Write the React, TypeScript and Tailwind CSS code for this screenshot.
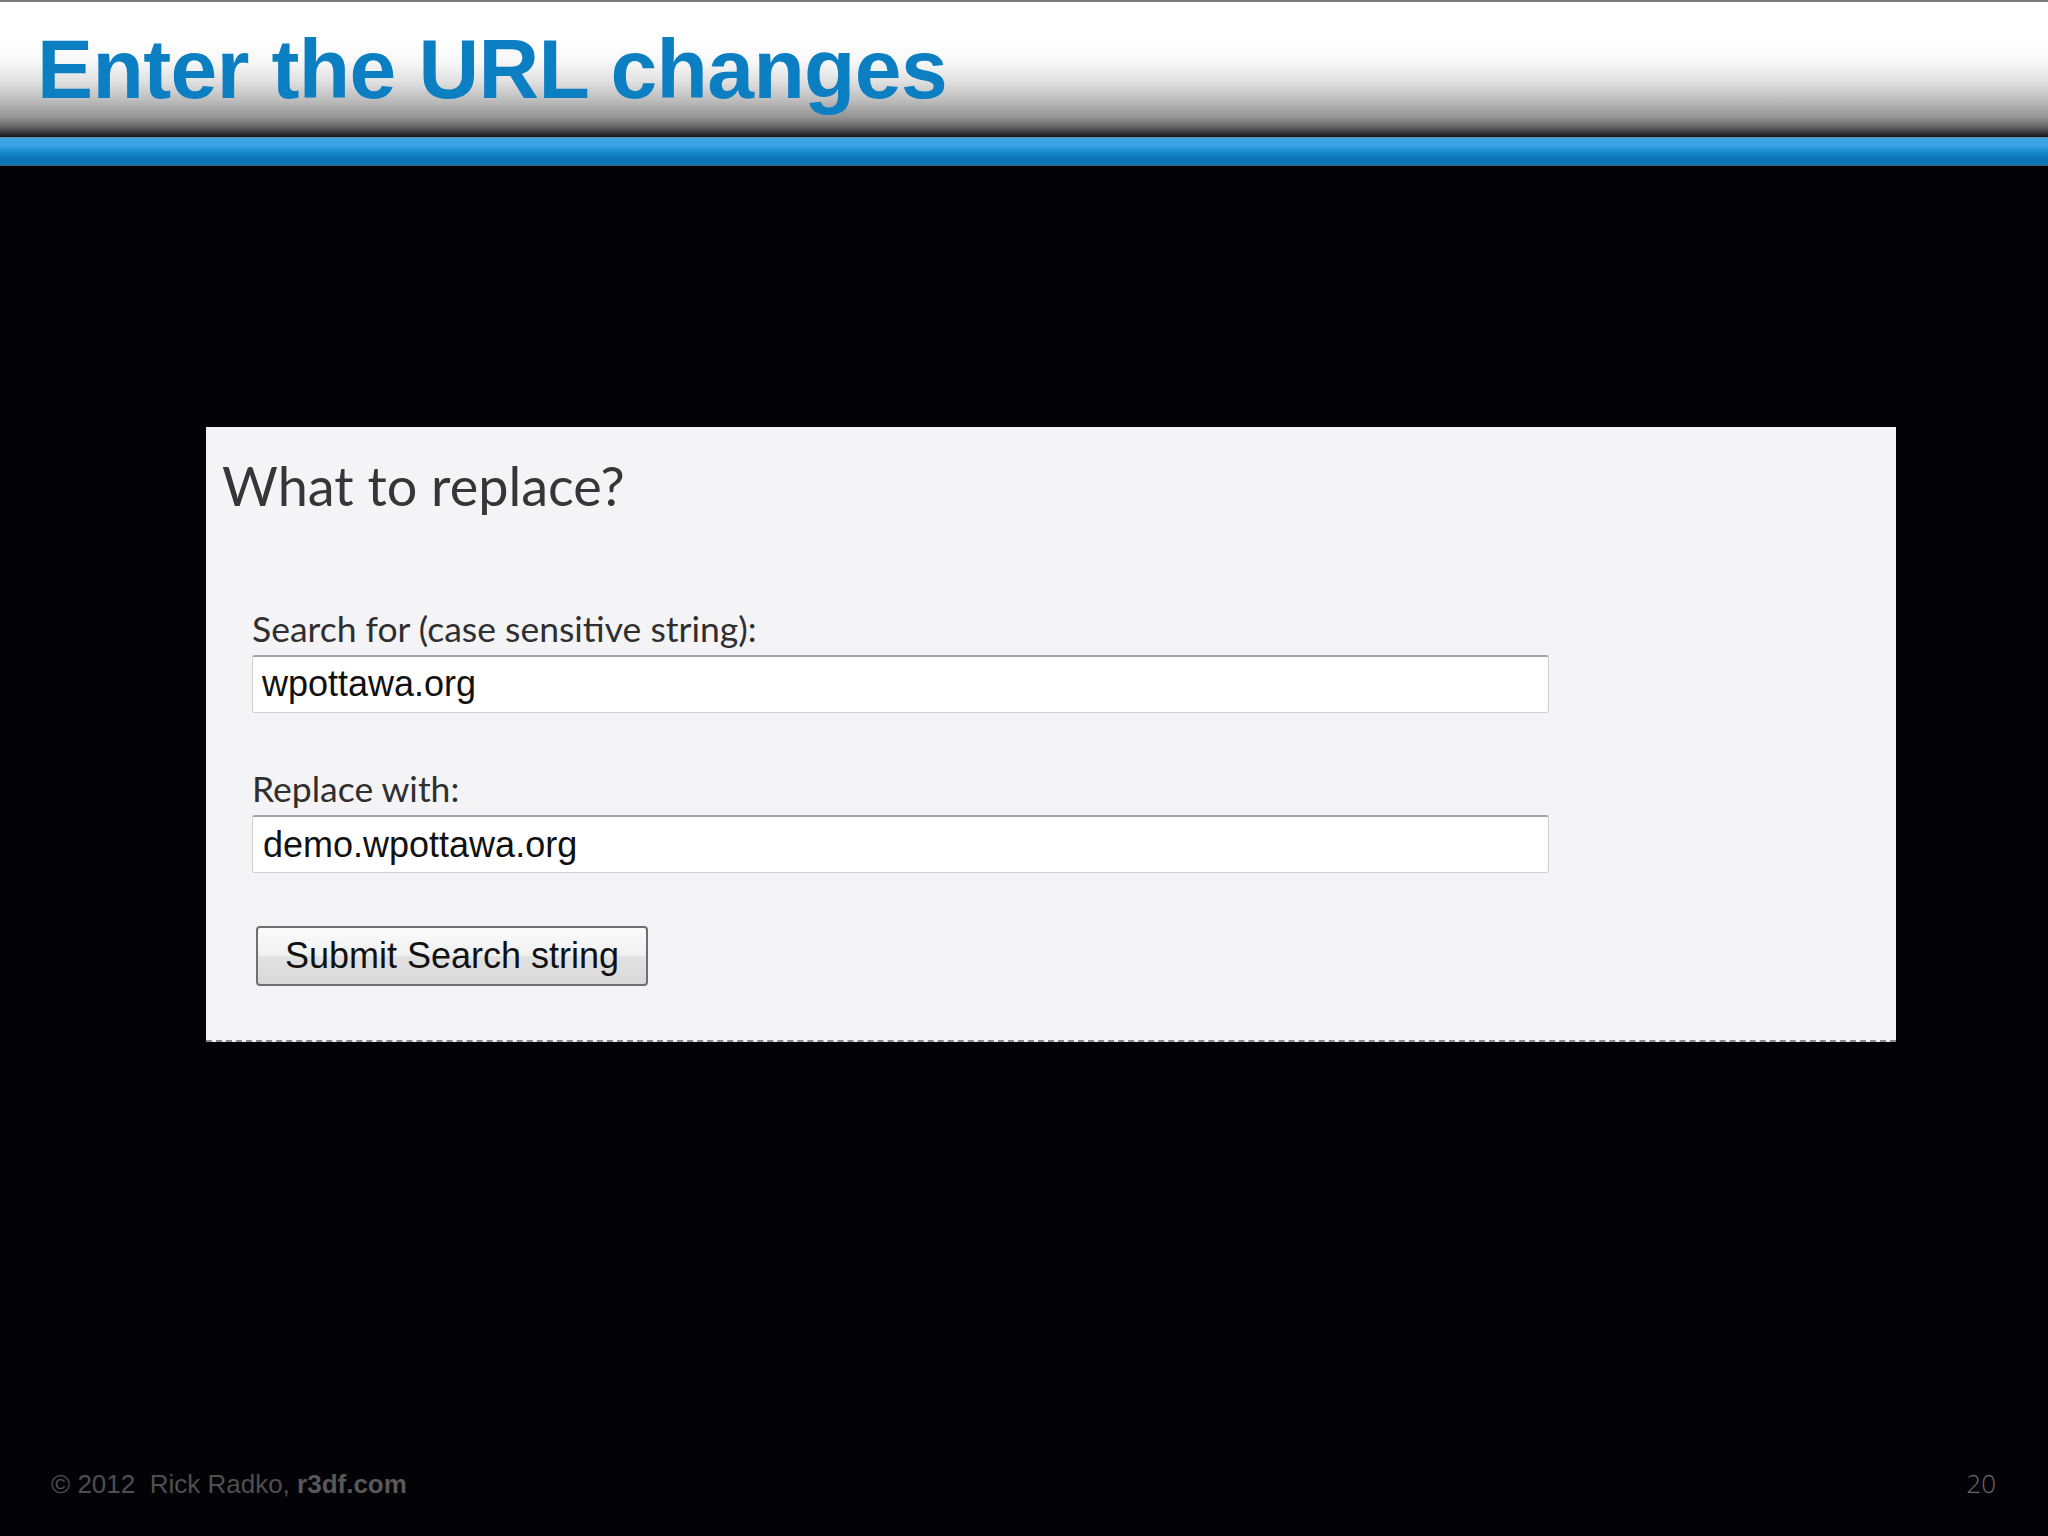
import React from "react";

export default function App() {
  return (
    <div className="w-[2048px] h-[1536px] bg-[#030207] flex flex-col overflow-hidden">
      <header className="h-[137px] shrink-0 border-t-2 border-[#7a7a7a] bg-[linear-gradient(to_bottom,#ffffff_0%,#ffffff_28%,#f8f8f8_44%,#e2e2e2_58%,#bcbcbc_73%,#959595_85%,#6b6b6b_92%,#3d3d40_96%,#18161d_100%)] pl-[37px] pt-[25px]">
        <h1 className="font-['Liberation_Sans',Arial,sans-serif] font-bold text-[84px] leading-none tracking-[-0.6px] text-[#0b7fc2]">
          Enter the URL changes
        </h1>
      </header>
      <div className="h-[29px] shrink-0 bg-[linear-gradient(to_bottom,#5f8aa6_0%,#3aa6e4_9%,#38a3e2_30%,#1586c8_55%,#0a75b8_75%,#0a74b6_93%,#47657a_100%)]" />
      <main className="flex-1 pt-[261px] pl-[206px]">
        <section className="w-[1690px] h-[615px] bg-[#f4f3f6] border-b-2 border-dashed border-[#8a8a8a] flex flex-col">
          <h2 className="pl-[16px] pt-[32px] font-['Lato','Open_Sans',sans-serif] text-[54px] leading-none text-[#363636]">
            What to replace?
          </h2>
          <form className="pl-[46px] mt-[98px] flex flex-col items-start" onSubmit={(e) => e.preventDefault()}>
            <label className="font-['Lato','Open_Sans',sans-serif] text-[35.5px] leading-none text-[#2f2f2f] mb-[8px]">
              Search for (case sensitive string):
            </label>
            <input
              readOnly
              value="wpottawa.org"
              className="w-[1297px] h-[58px] bg-white border border-[#cfcfcf] border-t-2 border-t-[#a3a3a3] rounded-[3px] pl-[9px] font-['Liberation_Sans',Arial,sans-serif] text-[36px] text-[#111] outline-none"
            />
            <label className="mt-[58px] font-['Lato','Open_Sans',sans-serif] text-[35.5px] leading-none text-[#2f2f2f] mb-[9px]">
              Replace with:
            </label>
            <input
              readOnly
              value="demo.wpottawa.org"
              className="w-[1297px] h-[58px] bg-white border border-[#cfcfcf] border-t-2 border-t-[#a3a3a3] rounded-[3px] pl-[10px] font-['Liberation_Sans',Arial,sans-serif] text-[36px] text-[#111] outline-none"
            />
            <button
              type="submit"
              className="mt-[53px] ml-[4px] w-[392px] h-[60px] border-2 border-[#6f6f6f] rounded-[4px] bg-[linear-gradient(to_bottom,#fbfbfb_0%,#f0f0f0_50%,#e2e2e2_51%,#d9d9d9_100%)] font-['Liberation_Sans',Arial,sans-serif] text-[36px] leading-none text-[#111]"
            >
              Submit Search string
            </button>
          </form>
        </section>
      </main>
      <footer className="shrink-0 flex justify-between items-baseline pl-[51px] pr-[52px] pb-[39px]">
        <p className="font-['Liberation_Sans',Arial,sans-serif] text-[26px] leading-none text-[#4f4f4f]">
          © 2012&nbsp; Rick Radko, <span className="font-bold text-[#585858]">r3df.com</span>
        </p>
        <p className="font-['Open_Sans',sans-serif] font-light text-[26px] leading-none text-[#6a6a6a]">20</p>
      </footer>
    </div>
  );
}
